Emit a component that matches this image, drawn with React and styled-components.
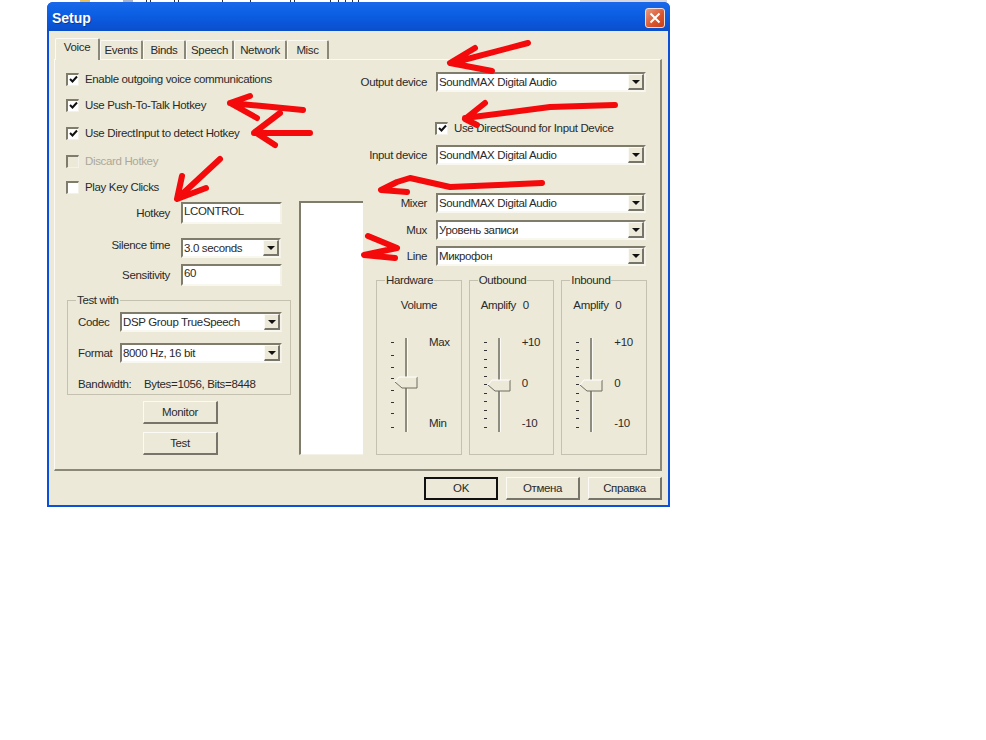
import React from "react";
import styled, { createGlobalStyle } from "styled-components";

const GlobalStyle = createGlobalStyle`
  html, body {
    margin: 0;
    padding: 0;
    background: #fff;
  }
  body {
    font-family: "Liberation Sans", Arial, sans-serif;
    font-size: 11.5px;
    letter-spacing: -0.35px;
    color: #2a2a2a;
  }
`;

const sunken = `
  border-style: solid;
  border-width: 2px;
  border-color: #7f7c6c #f4f2e8 #f8f7f0 #7f7c6c;
`;

const raised = `
  border-style: solid;
  border-width: 1px 2px 2px 1px;
  border-color: #fbfaf4 #77756a #77756a #fbfaf4;
`;

function Arrows() {
  const strokes = [
    "M303 110 L262 106 L230 103 M250 96 L230 103 L257 118",
    "M310 133 L254 133 M280 113 L255 132 L275 145",
    "M220 159 L178 198 M182 176 L177 199 L206 188",
    "M528 43 L452 63 M475 48 L450 63 L492 71",
    "M615 105 L550 107 L465 118 M485 103 L465 119 L477 125",
    "M542 183 L450 187 L410 178 L397 182 L381 190 L407 192",
    "M368 236 L397 248 L364 255 L395 258",
  ];
  return (
    <ArrowLayer width="986" height="740">
      {strokes.map((d) => (
        <path
          key={d}
          d={d}
          fill="none"
          stroke="#f40a0a"
          strokeWidth="6"
          strokeLinecap="round"
          strokeLinejoin="round"
        />
      ))}
    </ArrowLayer>
  );
}

function Combo({ value, width, height = 20 }) {
  return (
    <ComboBox $width={width} $height={height}>
      <span>{value}</span>
      <ComboButton>
        <svg width="8" height="4">
          <path d="M0 0 H8 L4 4 Z" fill="#111" />
        </svg>
      </ComboButton>
    </ComboBox>
  );
}

function Check({ checked, disabled, label, top }) {
  return (
    <CheckRow $top={top} $disabled={disabled}>
      <CheckBox $disabled={disabled}>
        {checked && (
          <svg width="9" height="9" viewBox="0 0 9 9">
            <path d="M1 4 L3.5 6.5 L8 1.5" fill="none" stroke="#111" strokeWidth="2" />
          </svg>
        )}
      </CheckBox>
      <span>{label}</span>
    </CheckRow>
  );
}

function Slider({ ticks, track, thumbY }) {
  return (
    <svg width="40" height="100" style={{ flex: "none" }}>
      {ticks.map((y) => (
        <rect key={y} x="2" y={y} width="3" height="1" fill="#333" />
      ))}
      <rect x={track - 1} y="3" width="2" height="94" fill="#8e8c7e" />
      <rect x={track + 1} y="3" width="1" height="94" fill="#fbfaf4" />
      <path
        d={`M${track - 7} ${thumbY} H${track + 11} V${thumbY + 11} H${track - 4} L${track - 11} ${thumbY + 5} Z`}
        fill="#ece9d8"
      />
      <path
        d={`M${track + 11} ${thumbY} V${thumbY + 11} H${track - 4} L${track - 11} ${thumbY + 5}`}
        fill="none"
        stroke="#6f6d60"
      />
      <path d={`M${track - 11} ${thumbY + 5} L${track - 7} ${thumbY} H${track + 11}`} fill="none" stroke="#fff" />
    </svg>
  );
}

const coarse = [7, 20, 32, 43, 55, 67, 78, 92];
const fine = [7, 15, 24, 32, 41, 49, 58, 66, 75, 83, 92];

export default function App() {
  return (
    <Page>
      <GlobalStyle />
      <TopStrip width="986" height="2">
        <rect x="80" y="0" width="10" height="2" fill="#e8c060" />
        <rect x="123" y="0" width="10" height="2" fill="#aab4c8" />
        {[146, 150, 174, 178, 222, 250, 290, 294, 330, 338, 345, 352, 358].map((x) => (
          <rect key={x} x={x} y="0" width="1" height="2" fill="#333" />
        ))}
        <rect x="580" y="0" width="87" height="2" fill="#d8d8dc" />
      </TopStrip>
      <Dialog>
        <TitleBar>
          <TitleText>Setup</TitleText>
          <CloseButton>
            <svg width="12" height="12">
              <path d="M1.5 1.5 L10.5 10.5 M10.5 1.5 L1.5 10.5" stroke="#fff" strokeWidth="2" />
            </svg>
          </CloseButton>
        </TitleBar>
        <Body>
          <Tabs>
            <Tab $active $width={45}>Voice</Tab>
            <Tab $width={43}>Events</Tab>
            <Tab $width={43}>Binds</Tab>
            <Tab $width={48}>Speech</Tab>
            <Tab $width={53}>Network</Tab>
            <Tab $width={42}>Misc</Tab>
          </Tabs>
          <Panel>
            <LeftColumn>
              <Check checked label="Enable outgoing voice communications" top={0} />
              <Check checked label="Use Push-To-Talk Hotkey" top={10} />
              <Check checked label="Use DirectInput to detect Hotkey" top={12} />
              <Check disabled label="Discard Hotkey" top={12} />
              <Check label="Play Key Clicks" top={10} />
              <FieldRow $top={7}>
                <FieldLabel>Hotkey</FieldLabel>
                <TextInput>LCONTROL</TextInput>
              </FieldRow>
              <FieldRow $top={14}>
                <FieldLabel $raise={7}>Silence time</FieldLabel>
                <Combo value="3.0 seconds" width={100} />
              </FieldRow>
              <FieldRow $top={6}>
                <FieldLabel>Sensitivity</FieldLabel>
                <TextInput>60</TextInput>
              </FieldRow>
              <TestGroup>
                <Legend>Test with</Legend>
                <CodecRow>
                  <CodecLabel>Codec</CodecLabel>
                  <Combo value="DSP Group TrueSpeech" width={162} />
                </CodecRow>
                <CodecRow $top={11}>
                  <CodecLabel>Format</CodecLabel>
                  <Combo value="8000 Hz, 16 bit" width={162} />
                </CodecRow>
                <BandwidthRow>
                  <span>Bandwidth:</span>
                  <span>Bytes=1056, Bits=8448</span>
                </BandwidthRow>
              </TestGroup>
              <PushButton $top={6}>Monitor</PushButton>
              <PushButton $top={8}>Test</PushButton>
            </LeftColumn>

            <TopRight>
              <DeviceRow>
                <DeviceLabel>Output device</DeviceLabel>
                <Combo value="SoundMAX Digital Audio" width={210} />
              </DeviceRow>
              <DirectSoundRow>
                <Check checked label="Use DirectSound for Input Device" top={0} />
              </DirectSoundRow>
              <DeviceRow $top={9}>
                <DeviceLabel>Input device</DeviceLabel>
                <Combo value="SoundMAX Digital Audio" width={210} />
              </DeviceRow>
            </TopRight>

            <ListBox />

            <BottomRight>
              <DeviceRow>
                <DeviceLabel>Mixer</DeviceLabel>
                <Combo value="SoundMAX Digital Audio" width={210} />
              </DeviceRow>
              <DeviceRow $top={7}>
                <DeviceLabel>Mux</DeviceLabel>
                <Combo value="Уровень записи" width={210} />
              </DeviceRow>
              <DeviceRow $top={6}>
                <DeviceLabel>Line</DeviceLabel>
                <Combo value="Микрофон" width={210} />
              </DeviceRow>
              <VolumeGroups>
                <VolumeGroup>
                  <Legend>Hardware</Legend>
                  <CenteredHead>Volume</CenteredHead>
                  <SliderRow>
                    <Slider ticks={coarse} track={17} thumbY={42} />
                    <Scale>
                      <span>Max</span>
                      <span>Min</span>
                    </Scale>
                  </SliderRow>
                </VolumeGroup>
                <VolumeGroup>
                  <Legend>Outbound</Legend>
                  <AmplifyHead>
                    <span>Amplify</span>
                    <span>0</span>
                  </AmplifyHead>
                  <SliderRow>
                    <Slider ticks={fine} track={17} thumbY={45} />
                    <Scale>
                      <span>+10</span>
                      <span>0</span>
                      <span>-10</span>
                    </Scale>
                  </SliderRow>
                </VolumeGroup>
                <VolumeGroup>
                  <Legend>Inbound</Legend>
                  <AmplifyHead>
                    <span>Amplify</span>
                    <span>0</span>
                  </AmplifyHead>
                  <SliderRow>
                    <Slider ticks={fine} track={17} thumbY={45} />
                    <Scale>
                      <span>+10</span>
                      <span>0</span>
                      <span>-10</span>
                    </Scale>
                  </SliderRow>
                </VolumeGroup>
              </VolumeGroups>
            </BottomRight>
          </Panel>
          <Footer>
            <FooterButton $default>OK</FooterButton>
            <FooterButton>Отмена</FooterButton>
            <FooterButton>Справка</FooterButton>
          </Footer>
        </Body>
      </Dialog>
      <Arrows />
    </Page>
  );
}

const Page = styled.div`
  position: relative;
  width: 986px;
  height: 740px;
  overflow: hidden;
  background: #fff;
`;

const TopStrip = styled.svg`
  display: block;
`;

const ArrowLayer = styled.svg`
  position: absolute;
  top: 0;
  left: 0;
  pointer-events: none;
`;

const Dialog = styled.div`
  width: 623px;
  height: 505px;
  margin-left: 47px;
  box-sizing: border-box;
  display: flex;
  flex-direction: column;
  border-radius: 6px 6px 0 0;
  overflow: hidden;
  background: #0a50d8;
`;

const TitleBar = styled.div`
  height: 29px;
  flex: none;
  box-sizing: border-box;
  padding: 6px 5px 0 5px;
  display: flex;
  align-items: flex-start;
  justify-content: space-between;
  background: linear-gradient(to bottom, #1a68e8 0%, #0e62e6 30%, #0a56da 70%, #0a4fc8 100%);
`;

const TitleText = styled.div`
  font-weight: bold;
  font-size: 14px;
  letter-spacing: 0;
  line-height: 21px;
  color: #fff;
  text-shadow: 1px 1px 0 #0a3a9c;
`;

const CloseButton = styled.div`
  width: 20px;
  height: 20px;
  box-sizing: border-box;
  display: flex;
  align-items: center;
  justify-content: center;
  border: 1px solid #f2ddd4;
  border-radius: 3px;
  background: linear-gradient(135deg, #e89a80, #d9542c 60%, #c8401c);
`;

const Body = styled.div`
  flex: 1;
  margin: 0 2px 2px 2px;
  box-sizing: border-box;
  background: #ece9d8;
  display: flex;
  flex-direction: column;
  padding: 7px 6px 0 5px;
`;

const Tabs = styled.div`
  display: flex;
  align-items: flex-end;
  height: 21px;
  flex: none;
  padding-left: 1px;
  position: relative;
  z-index: 1;
`;

const Tab = styled.div`
  width: ${(p) => p.$width}px;
  height: ${(p) => (p.$active ? 22 : 19)}px;
  margin-bottom: ${(p) => (p.$active ? -1 : 0)}px;
  box-sizing: border-box;
  border-style: solid;
  border-width: 1px 2px 0 1px;
  border-color: #fbfaf4 #8a8878 #fbfaf4 #fbfaf4;
  border-radius: 2px 2px 0 0;
  background: #ece9d8;
  text-align: center;
  line-height: ${(p) => (p.$active ? 17 : 19)}px;
`;

const Panel = styled.div`
  height: 412px;
  flex: none;
  box-sizing: border-box;
  border-style: solid;
  border-width: 1px 2px 2px 1px;
  border-color: #fbfaf4 #8a8878 #8a8878 #fbfaf4;
  padding-left: 11px;
  display: grid;
  grid-template-columns: 225px 72px 284px;
  grid-template-rows: 123px auto;
`;

const LeftColumn = styled.div`
  grid-column: 1;
  grid-row: 1 / span 2;
  padding-top: 11px;
  display: flex;
  flex-direction: column;
`;

const CheckRow = styled.div`
  height: 16px;
  margin-top: ${(p) => p.$top}px;
  display: flex;
  align-items: center;
  gap: 6px;
  color: ${(p) => (p.$disabled ? "#aca899" : "#2a2a2a")};
  white-space: nowrap;
`;

const CheckBox = styled.div`
  width: 13px;
  height: 13px;
  flex: none;
  box-sizing: border-box;
  border-style: solid;
  border-width: 2px 1px 1px 2px;
  border-color: #7f7c6c #f4f2e8 #f4f2e8 #7f7c6c;
  background: ${(p) => (p.$disabled ? "#ece9d8" : "#fff")};
  display: flex;
  align-items: center;
  justify-content: center;
`;

const FieldRow = styled.div`
  margin-top: ${(p) => p.$top}px;
  display: flex;
  align-items: center;
  gap: 11px;
`;

const FieldLabel = styled.div`
  width: 104px;
  margin-bottom: ${(p) => p.$raise || 0}px;
  text-align: right;
  white-space: nowrap;
`;

const TextInput = styled.div`
  width: 101px;
  height: 22px;
  box-sizing: border-box;
  ${sunken}
  background: #fff;
  padding-left: 1px;
  line-height: 15px;
`;

const ComboBox = styled.div`
  width: ${(p) => p.$width}px;
  height: ${(p) => p.$height}px;
  flex: none;
  box-sizing: border-box;
  ${sunken}
  background: #fff;
  display: flex;
  align-items: center;
  justify-content: space-between;
  padding-left: 1px;
  white-space: nowrap;
`;

const ComboButton = styled.div`
  width: 16px;
  height: 16px;
  flex: none;
  box-sizing: border-box;
  ${raised}
  background: #ece9d8;
  display: flex;
  align-items: center;
  justify-content: center;
`;

const TestGroup = styled.div`
  position: relative;
  margin: 14px 0 0 1px;
  padding: 11px 0 0 0;
  width: 224px;
  height: 95px;
  box-sizing: border-box;
  border: 1px solid #c4c1b0;
`;

const Legend = styled.div`
  position: absolute;
  top: -8px;
  left: 8px;
  padding: 0 1px;
  line-height: 14px;
  background: #ece9d8;
  white-space: nowrap;
`;

const CodecRow = styled.div`
  margin-top: ${(p) => p.$top || 0}px;
  display: flex;
  align-items: center;
  padding-left: 10px;
`;

const CodecLabel = styled.div`
  width: 42px;
`;

const BandwidthRow = styled.div`
  margin-top: 15px;
  padding-left: 10px;
  display: flex;
  white-space: nowrap;
  & > span:first-child {
    width: 66px;
  }
`;

const PushButton = styled.div`
  width: 75px;
  height: 23px;
  margin: ${(p) => p.$top}px 0 0 77px;
  flex: none;
  box-sizing: border-box;
  ${raised}
  background: #ece9d8;
  text-align: center;
  line-height: 20px;
`;

const TopRight = styled.div`
  grid-column: 2 / span 2;
  grid-row: 1;
  padding-top: 12px;
`;

const DeviceRow = styled.div`
  margin-top: ${(p) => p.$top || 0}px;
  display: flex;
  align-items: center;
  justify-content: flex-end;
  gap: 9px;
  padding-right: 1px;
`;

const DeviceLabel = styled.div`
  white-space: nowrap;
`;

const DirectSoundRow = styled.div`
  margin-top: 28px;
  padding-left: 144px;
`;

const ListBox = styled.div`
  grid-column: 2;
  grid-row: 2;
  margin: 18px 0 0 8px;
  height: 254px;
  box-sizing: border-box;
  border-style: solid;
  border-width: 2px 0 1px 2px;
  border-color: #7f7c6c #fff #f4f2e8 #7f7c6c;
  background: #fff;
`;

const BottomRight = styled.div`
  grid-column: 3;
  grid-row: 2;
  padding-top: 10px;
  min-width: 0;
`;

const VolumeGroups = styled.div`
  margin: 14px 0 0 13px;
  display: flex;
  gap: 7px;
`;

const VolumeGroup = styled.div`
  position: relative;
  width: 86px;
  height: 175px;
  box-sizing: border-box;
  border: 1px solid #c4c1b0;
  padding-top: 16px;
`;

const CenteredHead = styled.div`
  text-align: center;
  line-height: 16px;
`;

const AmplifyHead = styled.div`
  display: flex;
  padding-left: 11px;
  line-height: 16px;
  & > span:first-child {
    width: 42px;
  }
`;

const SliderRow = styled.div`
  margin-top: 22px;
  padding-left: 12px;
  display: flex;
`;

const Scale = styled.div`
  height: 95px;
  display: flex;
  flex-direction: column;
  justify-content: space-between;
  line-height: 14px;
`;

const Footer = styled.div`
  display: flex;
  justify-content: flex-end;
  gap: 8px;
  padding: 6px 0 0 0;
`;

const FooterButton = styled.div`
  width: 74px;
  height: 23px;
  box-sizing: border-box;
  background: #ece9d8;
  text-align: center;
  ${(p) =>
    p.$default
      ? `border: 2px solid #111; line-height: 19px;`
      : `${raised} line-height: 20px;`}
`;
